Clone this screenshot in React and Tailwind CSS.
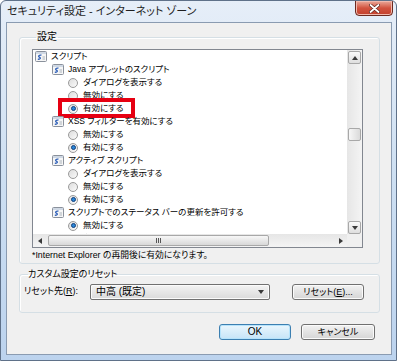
import React from "react";

const rows = [
  { level: 0, icon: true, label: "スクリプト" },
  { level: 1, icon: true, label: "Java アプレットのスクリプト" },
  { level: 2, label: "ダイアログを表示する" },
  { level: 2, label: "無効にする" },
  { level: 2, label: "有効にする", checked: true, mark: true },
  { level: 1, icon: true, label: "XSS フィルターを有効にする" },
  { level: 2, label: "無効にする" },
  { level: 2, label: "有効にする", checked: true },
  { level: 1, icon: true, label: "アクティブ スクリプト" },
  { level: 2, label: "ダイアログを表示する" },
  { level: 2, label: "無効にする" },
  { level: 2, label: "有効にする", checked: true },
  { level: 1, icon: true, label: "スクリプトでのステータス バーの更新を許可する" },
  { level: 2, label: "無効にする", checked: true },
  { level: 2, label: "有効にする" },
];

const indent = ["pl-[2px]", "pl-[19px]", "pl-[35px]"];

function ScriptIcon() {
  return (
    <svg width="12" height="11" viewBox="0 0 12 11" className="shrink-0">
      <rect x="0.5" y="0.5" width="11" height="10" rx="1" fill="#f6f6f6" stroke="#8a919c" />
      <rect x="1" y="1" width="10" height="2" fill="#cfd8e4" />
      <path d="M6.5 4.2 C4.2 3.6 2.6 5.3 4.4 6.1 C6 6.8 5.6 8.6 2.8 8.2" fill="none" stroke="#2d5fb8" strokeWidth="1.3" />
      <path d="M7.5 6h2.5M7.5 8h2.5" stroke="#9aa3ad" strokeWidth="0.8" />
    </svg>
  );
}

function Radio({ checked }) {
  return (
    <span className="flex h-[10px] w-[10px] shrink-0 items-center justify-center rounded-full border border-[#9a9a9a] bg-gradient-to-br from-[#dcdcdc] to-[#fbfbfb]">
      {checked && (
        <span className="h-[5px] w-[5px] rounded-full border border-[#0f3f7c] bg-[#2a86d8]" />
      )}
    </span>
  );
}

function Tri({ dir }) {
  const d = {
    up: "M0 4 L3 0 L6 4 Z",
    down: "M0 0 L6 0 L3 4 Z",
    left: "M4 0 L4 6 L0 3 Z",
    right: "M0 0 L4 3 L0 6 Z",
  }[dir];
  const wide = dir === "up" || dir === "down";
  return (
    <svg width={wide ? 6 : 4} height={wide ? 4 : 6} viewBox={wide ? "0 0 6 4" : "0 0 4 6"}>
      <path d={d} fill="#3a3a3a" />
    </svg>
  );
}

function ScrollButton({ dir }) {
  return (
    <div className="mx-[1px] flex h-[13px] items-center justify-center rounded-[2px] border border-[#a8a8a8] bg-gradient-to-b from-[#fafafa] to-[#dedede]">
      <Tri dir={dir} />
    </div>
  );
}

function Button({ children, primary, className = "" }) {
  return (
    <button
      className={`flex h-[16px] items-center justify-center rounded-[3px] border bg-gradient-to-b text-[9px] leading-none text-black ${
        primary
          ? "border-[#3c7fb1] from-[#eaf6fd] to-[#c6e4f7] shadow-[inset_0_0_0_1px_#b6e3fb]"
          : "border-[#707070] from-[#f2f2f2] to-[#d5d5d5] shadow-[inset_0_0_0_1px_#fbfbfb]"
      } ${className}`}
    >
      {children}
    </button>
  );
}

export default function App() {
  return (
    <div className="flex h-[361px] w-[397px] flex-col overflow-hidden rounded-t-[6px] border border-[#5f7189] bg-gradient-to-b from-[#e6eef8] via-[#cddff2] to-[#bcd3ee] text-black [font-family:'Liberation_Sans','Noto_Sans_CJK_JP',sans-serif] [font-feature-settings:'palt']">
      {/* Title bar */}
      <div className="flex h-[21px] shrink-0 items-start">
        <span className="ml-[6px] mt-[4px] flex-1 text-[11px] leading-[13px] text-[#1e1e1e]">
          セキュリティ設定 - インターネット ゾーン
        </span>
        <div className="mr-[3px] mt-[-1px] flex h-[16px] w-[38px] items-center justify-center rounded-b-[4px] border border-[#6b2a20] bg-gradient-to-b from-[#e9a99b] via-[#d2533f] to-[#c2402c] shadow-[inset_0_0_0_1px_#f1b9ad]">
          <svg width="11" height="9" viewBox="0 0 11 9">
            <path d="M1.5 1 L9.5 8 M9.5 1 L1.5 8" stroke="#5b231c" strokeWidth="3.2" strokeLinecap="round" />
            <path d="M1.5 1 L9.5 8 M9.5 1 L1.5 8" stroke="#ffffff" strokeWidth="1.8" strokeLinecap="round" />
          </svg>
        </div>
      </div>

      {/* Client area */}
      <div className="ml-[5px] mr-[4px] flex h-[333px] shrink-0 flex-col border border-[#8a9bb1] bg-[#f0f0f0] text-[8.5px]">
        {/* 設定 group */}
        <fieldset className="ml-[12px] mt-[8px] w-[361px] rounded-[3px] border border-[#d5dfe5] pb-[2px] pl-[12px] pt-[6px] shadow-[inset_1px_1px_0_#ffffff]">
          <legend className="ml-[4px] px-[1px] text-[10px] leading-[12px]">設定</legend>

          {/* List box */}
          <div className="grid h-[199px] w-[331px] grid-cols-[1fr_15px] grid-rows-[1fr_13px] border border-[#828790] bg-white">
            <div className="overflow-hidden">
              {rows.map((r, i) => (
                <div key={i} className={`relative flex h-[13px] items-center ${indent[r.level]}`}>
                  {r.icon ? <ScriptIcon /> : <Radio checked={r.checked} />}
                  <span className={`whitespace-nowrap leading-[13px] ${r.icon ? "ml-[4px]" : "ml-[5px]"}`}>
                    {r.label}
                  </span>
                  {r.mark && (
                    <span className="absolute left-[25px] top-[-4px] h-[20px] w-[77px] border-[4px] border-[#e60012]" />
                  )}
                </div>
              ))}
            </div>

            {/* vertical scrollbar */}
            <div className="flex flex-col bg-gradient-to-r from-[#e6e6e6] to-[#f4f4f4] pt-[1px]">
              <ScrollButton dir="up" />
              <div className="mx-[1px] mt-[64px] h-[13px] rounded-[2px] border border-[#a8a8a8] bg-gradient-to-r from-[#f7f7f7] to-[#dadada]" />
              <div className="flex-1" />
              <ScrollButton dir="down" />
            </div>

            {/* horizontal scrollbar */}
            <div className="flex items-center bg-gradient-to-b from-[#e6e6e6] to-[#f4f4f4]">
              <div className="flex w-[13px] justify-center">
                <Tri dir="left" />
              </div>
              <div className="ml-[2px] flex h-[11px] w-[221px] items-center justify-center gap-[1px] rounded-[2px] border border-[#a8a8a8] bg-gradient-to-b from-[#f7f7f7] to-[#d8d8d8]">
                <span className="h-[5px] w-[1px] bg-[#555]" />
                <span className="h-[5px] w-[1px] bg-[#555]" />
                <span className="h-[5px] w-[1px] bg-[#555]" />
              </div>
              <div className="flex-1" />
              <div className="flex w-[13px] justify-center">
                <Tri dir="right" />
              </div>
            </div>
            <div className="bg-[#f0f0f0]" />
          </div>

          <p className="mt-[1px] whitespace-nowrap text-[8.8px] leading-[12px]">
            *Internet Explorer の再開後に有効になります。
          </p>
        </fieldset>

        {/* カスタム設定のリセット group */}
        <fieldset className="ml-[12px] mt-[4px] w-[361px] rounded-[3px] border border-[#d5dfe5] pb-[12px] pl-[4px] pt-[4px] shadow-[inset_1px_1px_0_#ffffff]">
          <legend className="ml-[4px] px-0 text-[9px] leading-[12px]">カスタム設定のリセット</legend>
          <div className="flex h-[16px] items-center">
            <span className="w-[66px] whitespace-nowrap text-[9px]">
              リセット先(<span className="underline">R</span>):
            </span>
            <div className="flex h-[16px] w-[180px] items-center justify-between rounded-[2px] border border-[#707070] bg-gradient-to-b from-[#f3f3f3] to-[#dadada] pl-[5px] pr-[5px] shadow-[inset_0_0_0_1px_#fbfbfb]">
              <span className="text-[10px] leading-none">中高 (既定)</span>
              <Tri dir="down" />
            </div>
            <Button className="ml-[22px] w-[72px]">
              リセット(<span className="underline">E</span>)...
            </Button>
          </div>
        </fieldset>

        {/* Dialog buttons */}
        <div className="mr-[16px] mt-[11px] flex justify-end gap-[10px]">
          <Button primary className="w-[72px] text-[10px]">OK</Button>
          <Button className="w-[74px]">キャンセル</Button>
        </div>
      </div>
    </div>
  );
}
